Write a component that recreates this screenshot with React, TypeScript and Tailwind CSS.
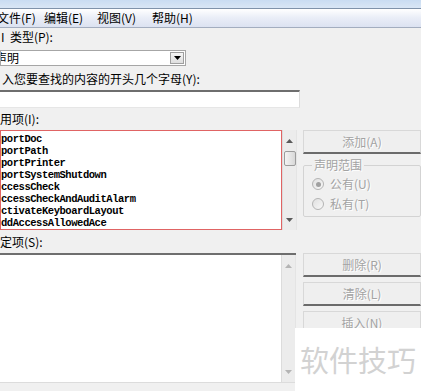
import React from 'react';

const cjk = { fontFamily: '"Noto Sans CJK SC", "Liberation Sans", sans-serif' };
const mono = { fontFamily: '"Liberation Mono", "Courier New", monospace' };

const availableItems = [
  'portDoc',
  'portPath',
  'portPrinter',
  'portSystemShutdown',
  'ccessCheck',
  'ccessCheckAndAuditAlarm',
  'ctivateKeyboardLayout',
  'ddAccessAllowedAce',
];

const Arrow = ({ up, color }: { up?: boolean; color: string }) => (
  <svg width="7" height="4" viewBox="0 0 7 4">
    {up ? <path d="M0 4 L3.5 0 L7 4 Z" fill={color} /> : <path d="M0 0 L3.5 4 L7 0 Z" fill={color} />}
  </svg>
);

const ScrollBar = ({ thumb, disabled }: { thumb?: boolean; disabled?: boolean }) => (
  <div className="w-[15px] h-full flex flex-col items-center bg-[#ececec] border-l border-[#dcdcdc] border-r border-r-[#e4e4e4]">
    <div className="h-[16px] w-full flex items-center justify-center mt-[3px]">
      <Arrow up color={disabled ? '#b4b4b4' : '#5a5a5a'} />
    </div>
    {thumb && (
      <div className="w-[12px] h-[15px] mt-[2px] rounded-[2px] border border-[#9c9c9c] bg-gradient-to-r from-[#f4f4f4] to-[#d8d8d8]" />
    )}
    <div className="flex-1" />
    <div className="h-[16px] w-full flex items-center justify-center mb-[2px]">
      <Arrow color={disabled ? '#b4b4b4' : '#5a5a5a'} />
    </div>
  </div>
);

const Button = ({ label, className = '' }: { label: string; className?: string }) => (
  <div
    className={`w-[118px] flex items-center justify-center bg-[#efefef] border border-[#d8d8d8] border-b-2 border-b-[#6b6b6b] text-[12px] text-[#a3a3a3] ${className}`}
    style={{ ...cjk, textShadow: '1px 1px 0 #ffffff' }}
  >
    {label}
  </div>
);

const Radio = ({ checked, label }: { checked?: boolean; label: string }) => (
  <div className="flex items-center gap-[6px] h-[20px]">
    <div className="w-[12px] h-[12px] rounded-full border border-[#b4b4b4] bg-gradient-to-br from-[#e0e0e0] to-[#f8f8f8] flex items-center justify-center">
      {checked && <div className="w-[5px] h-[5px] rounded-full bg-[#a0a0a0]" />}
    </div>
    <span className="text-[12px] text-[#a3a3a3]" style={{ ...cjk, textShadow: '1px 1px 0 #ffffff' }}>
      {label}
    </span>
  </div>
);

export default function App() {
  return (
    <div className="relative w-[421px] h-[391px] overflow-hidden bg-[#f0f0f0] text-black" style={cjk}>
      {/* title strip */}
      <div className="h-[9px] bg-gradient-to-b from-[#c9dcf2] to-[#d9e6f5] border-b border-[#7f92aa]" />

      {/* menu bar */}
      <div className="h-[19px] flex items-center text-[12px] bg-gradient-to-b from-[#ffffff] via-[#e9edf7] to-[#dce2f1] border-b border-[#a3adbf]">
        <span className="w-[47px] ml-[-3px]">文件(F)</span>
        <span className="w-[53px]">编辑(E)</span>
        <span className="w-[55px]">视图(V)</span>
        <span>帮助(H)</span>
      </div>

      <div className="h-[17px] flex items-center text-[12px]">
        <span className="ml-[1px]">I&nbsp;&nbsp;类型(P):</span>
      </div>

      {/* combo */}
      <div className="mt-[5px] w-[186px] h-[16px] flex items-center bg-white border border-[#a6a6a6] overflow-hidden">
        <span className="flex-1 text-[12px] ml-[-6px] leading-[14px]">声明</span>
        <div className="w-[14px] h-[12px] mr-[1px] flex items-center justify-center bg-gradient-to-b from-[#f6f6f6] to-[#dedede] border border-[#9f9f9f]">
          <Arrow color="#000000" />
        </div>
      </div>

      <div className="h-[24px] flex items-center pt-[2px] text-[12px]">
        <span className="ml-[2px]">入您要查找的内容的开头几个字母(Y):</span>
      </div>

      {/* search input */}
      <div className="w-[300px] h-[18px] bg-white border-t-2 border-t-[#6e6e6e] border-r border-r-[#dcdcdc] border-b border-b-[#e6e6e6]" />

      <div className="h-[22px] flex items-center text-[12px]">
        <span>用项(I):</span>
      </div>

      {/* available list + add / scope */}
      <div className="flex h-[100px]">
        <div className="w-[300px] h-full flex">
          <div className="flex-1 h-full bg-white border border-[#e06464] pt-[2px] overflow-hidden">
            {availableItems.map((item) => (
              <div
                key={item}
                className="h-[12px] leading-[12px] text-[10.5px] tracking-[-0.45px] font-bold whitespace-nowrap"
                style={mono}
              >
                {item}
              </div>
            ))}
          </div>
          <ScrollBar thumb />
        </div>
        <div className="ml-[6px] flex flex-col">
          <Button label="添加(A)" className="h-[24px]" />
          <fieldset className="mt-[5px] w-[118px] h-[58px] border border-[#d3d3d3] rounded-[2px] pl-[8px]">
            <legend className="px-[2px] ml-[0px] text-[12px] leading-[12px] text-[#a3a3a3]" style={{ textShadow: '1px 1px 0 #ffffff' }}>
              声明范围
            </legend>
            <div className="mt-[3px]">
              <Radio checked label="公有(U)" />
              <Radio label="私有(T)" />
            </div>
          </fieldset>
        </div>
      </div>

      <div className="h-[23px] flex items-center text-[12px]">
        <span>定项(S):</span>
      </div>

      {/* selected list + buttons */}
      <div className="flex h-[130px]">
        <div className="w-[300px] h-full flex border-t-2 border-t-[#6e6e6e] border-b border-b-[#dcdcdc]">
          <div className="flex-1 h-full bg-white" />
          <ScrollBar disabled />
        </div>
        <div className="ml-[7px] flex flex-col gap-[5px]">
          <Button label="删除(R)" className="h-[24px]" />
          <Button label="清除(L)" className="h-[24px]" />
          <Button label="插入(N)" className="h-[24px]" />
        </div>
      </div>

      {/* watermark overlay */}
      <div className="absolute left-[295px] top-[328px] right-0 bottom-0 bg-white flex items-center justify-center">
        <span className="text-[29px] leading-none text-[#d2d2d2] tracking-[0px]">软件技巧</span>
      </div>
    </div>
  );
}
